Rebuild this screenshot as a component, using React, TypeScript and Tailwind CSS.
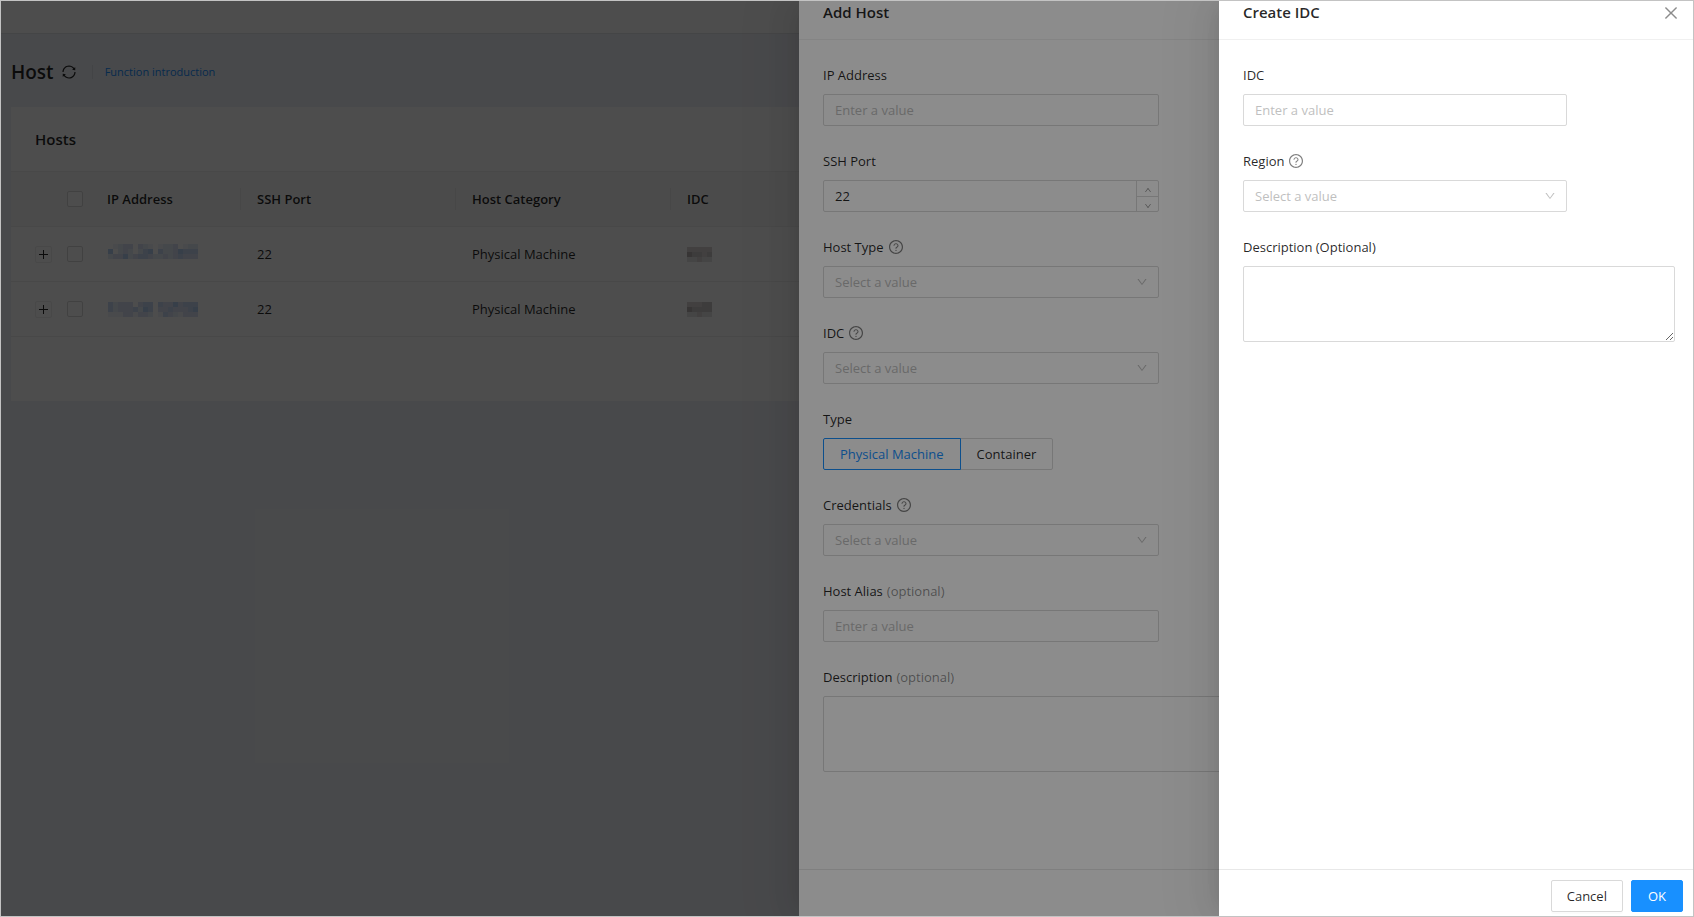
import { useState, type ReactNode } from "react";
import {
  AiOutlineClose,
  AiOutlineDown,
  AiOutlineQuestionCircle,
  AiOutlineSync,
  AiOutlineUp,
} from "react-icons/ai";

const drawerShadow =
  "shadow-[-6px_0_16px_-8px_rgba(0,0,0,0.08),-9px_0_28px_0_rgba(0,0,0,0.05),-12px_0_48px_16px_rgba(0,0,0,0.03)]";
const boxStyle =
  "border border-[#d9d9d9] rounded-xs bg-white text-black/85 placeholder:text-[#bfbfbf] outline-none focus:border-[#1890ff]";

// Masked values are drawn as 5px tiles, one string per tile row; higher digits mean stronger tiles.
const blueTones = ["transparent", "#f4f6fb", "#e8eef9", "#dae4f8", "#cbdcf7", "#b8d2f5"];
const grayTones = ["transparent", "#f1f1f1", "#e8e7e7", "#dad8d8", "#cbc8c7", "#b6b1b2"];

function Mosaic({ rows, tones, label }: { rows: string[]; tones: string[]; label: string }) {
  return (
    <svg
      width={rows[0].length * 5}
      height={rows.length * 5}
      role="img"
      aria-label={label}
      shapeRendering="crispEdges"
      className="block"
    >
      {rows.map((row, y) =>
        row.split("").map((tone, x) => (
          <rect key={`${x}-${y}`} x={x * 5} y={y * 5} width="5" height="5" fill={tones[Number(tone)]} />
        )),
      )}
    </svg>
  );
}

function Field({
  id,
  label,
  optional,
  help,
  children,
}: {
  id: string;
  label: string;
  optional?: boolean;
  help?: boolean;
  children: ReactNode;
}) {
  return (
    <div className="mb-6">
      <div className="mb-2 flex h-[22px] items-center gap-1">
        <label htmlFor={id}>{label}</label>
        {optional && <span className="text-black/45">(optional)</span>}
        {help && <AiOutlineQuestionCircle className="size-4 text-black/50" />}
      </div>
      {children}
    </div>
  );
}

function SelectBox({ id, width }: { id: string; width: string }) {
  return (
    <div className={`relative max-w-full ${width}`}>
      <select
        id={id}
        defaultValue=""
        className="block h-8 w-full appearance-none rounded-xs border border-[#d9d9d9] bg-white pr-8 pl-[11px] text-[#bfbfbf] outline-none"
      >
        <option value="">Select a value</option>
      </select>
      <AiOutlineDown className="pointer-events-none absolute top-[10px] right-[11px] size-3 text-black/25" />
    </div>
  );
}

function Drawer({
  title,
  width,
  closable,
  footer,
  children,
}: {
  title: string;
  width: string;
  closable?: boolean;
  footer?: ReactNode;
  children: ReactNode;
}) {
  return (
    <div className="absolute inset-0 isolate flex justify-end bg-black/45">
      <section
        aria-label={title}
        className={`flex h-full max-w-full flex-col bg-white ${width} ${drawerShadow}`}
      >
        <header className="flex h-[39px] shrink-0 items-start justify-between border-b border-[#f0f0f0] pr-[13px] pl-6">
          <h2 className="text-[15px] leading-[22px] font-semibold">{title}</h2>
          {closable && (
            <button type="button" aria-label="Close" className="mt-[3px] text-black/45">
              <AiOutlineClose className="size-[18px]" />
            </button>
          )}
        </header>
        <div className="min-h-0 flex-1 overflow-hidden pt-6 pr-[18px] pl-6">{children}</div>
        <footer className="flex h-[47px] shrink-0 items-start justify-end gap-2 border-t border-[#e8e8e8] px-[10px] pt-[10px]">
          {footer}
        </footer>
      </section>
    </div>
  );
}

const hosts = [
  {
    ip: ["012330321012230122", "502320245042235444", "233523443223234333", "000000000000000000"],
    idc: ["33333", "54434", "22322"],
  },
  {
    ip: ["423330344043353444", "423334254033433345", "111331332014321333"],
    idc: ["33344", "54444", "22322"],
  },
];

const cell = "border-b border-[#f0f0f0]";
const divided =
  "relative pl-4 text-left font-semibold before:absolute before:top-4 before:left-[-1px] before:h-[22px] before:w-px before:bg-black/6";
const tick = "block size-4 appearance-none rounded-xs border border-[#d9d9d9] bg-white";

function HostsPage() {
  return (
    <div className="h-full bg-[#f0f3f9]">
      <div className="h-[33px] border-b border-[#e4e6e9] bg-white" />
      <div className="pt-[23px] pl-[10px]">
        <div className="flex h-[30px] items-center">
          <h1 className="text-[19px] font-semibold">Host</h1>
          <button type="button" aria-label="Refresh" className="ml-[7px]">
            <AiOutlineSync className="size-4" />
          </button>
          <a href="#intro" className="ml-[15px] border-l border-black/6 pl-3 text-[11px] leading-[14px] text-[#1890ff]">
            Function introduction
          </a>
        </div>
        <main className="mt-5 bg-white pb-16">
          <h2 className="flex h-[65px] items-center border-b border-[#f0f0f0] pl-6 text-[15px] font-semibold">Hosts</h2>
          <table className="w-full table-fixed border-separate border-spacing-0">
            <colgroup>
              <col className="w-12" />
              <col className="w-8" />
              <col className="w-[150px]" />
              <col className="w-[215px]" />
              <col className="w-[215px]" />
              <col />
            </colgroup>
            <thead>
              <tr className="h-[55px] bg-[#fafafa]">
                <th className={cell} />
                <th className={`${cell} pl-2`}>
                  <input type="checkbox" aria-label="Select all hosts" className={tick} />
                </th>
                <th className={`${cell} pl-4 text-left font-semibold`}>IP Address</th>
                <th className={`${cell} ${divided}`}>SSH Port</th>
                <th className={`${cell} ${divided}`}>Host Category</th>
                <th className={`${cell} ${divided}`}>IDC</th>
              </tr>
            </thead>
            <tbody>
              {hosts.map((host, i) => (
                <tr key={i} className="h-[55px]">
                  <td className={`${cell} pl-6`}>
                    <button
                      type="button"
                      aria-label="Expand row"
                      className="flex size-[17px] items-center justify-center rounded-xs border border-[#f0f0f0]"
                    >
                      <svg viewBox="0 0 9 9" className="size-[9px] shrink-0" fill="currentColor" shapeRendering="crispEdges">
                        <path d="M4 0h1v4h4v1H5v4H4V5H0V4h4z" />
                      </svg>
                    </button>
                  </td>
                  <td className={`${cell} pl-2`}>
                    <input type="checkbox" aria-label={`Select host ${i + 1}`} className={tick} />
                  </td>
                  <td className={`${cell} pl-[17px]`}>
                    <Mosaic rows={host.ip} tones={blueTones} label="Masked address" />
                  </td>
                  <td className={`${cell} pl-4`}>22</td>
                  <td className={`${cell} pl-4`}>Physical Machine</td>
                  <td className={`${cell} pl-4`}>
                    <Mosaic rows={host.idc} tones={grayTones} label="Masked IDC" />
                  </td>
                </tr>
              ))}
            </tbody>
          </table>
        </main>
      </div>
    </div>
  );
}

export default function App() {
  const [port, setPort] = useState(22);
  const [kind, setKind] = useState("Physical Machine");

  return (
    <div className="relative h-screen overflow-hidden border border-[#c3c3c3] font-['Open_Sans',sans-serif] text-[13px] leading-[22px] text-black/85">
      <HostsPage />

      <Drawer title="Add Host" width="w-[894px]">
        <Field id="host-ip" label="IP Address">
          <input id="host-ip" placeholder="Enter a value" className={`block h-8 w-[336px] max-w-full px-[11px] ${boxStyle}`} />
        </Field>
        <Field id="host-port" label="SSH Port">
          <div className="flex h-8 w-[336px] max-w-full rounded-xs border border-[#d9d9d9]">
            <input
              id="host-port"
              inputMode="numeric"
              value={port}
              onChange={(e) => setPort(Number(e.target.value) || 0)}
              className="min-w-0 flex-1 px-[11px] outline-none"
            />
            <div className="flex w-[22px] flex-col border-l border-[#d9d9d9] text-black/45">
              <button
                type="button"
                aria-label="Increase"
                onClick={() => setPort(port + 1)}
                className="flex flex-1 items-center justify-center pt-1"
              >
                <AiOutlineUp className="size-2" />
              </button>
              <button
                type="button"
                aria-label="Decrease"
                onClick={() => setPort(port - 1)}
                className="flex flex-1 items-center justify-center border-t border-[#d9d9d9] pt-1"
              >
                <AiOutlineDown className="size-2" />
              </button>
            </div>
          </div>
        </Field>
        <Field id="host-type" label="Host Type" help>
          <SelectBox id="host-type" width="w-[336px]" />
        </Field>
        <Field id="host-idc" label="IDC" help>
          <SelectBox id="host-idc" width="w-[336px]" />
        </Field>
        <Field id="kind-0" label="Type">
          <div className="flex h-8">
            {["Physical Machine", "Container"].map((name, i) => (
              <label
                key={name}
                className={
                  kind === name
                    ? "relative z-10 flex items-center border border-[#1890ff] px-4 text-[#1890ff] first:rounded-l-xs last:-ml-px last:rounded-r-xs"
                    : "flex items-center border border-[#d9d9d9] px-4 first:rounded-l-xs last:-ml-px last:rounded-r-xs"
                }
              >
                <input
                  id={`kind-${i}`}
                  type="radio"
                  name="kind"
                  checked={kind === name}
                  onChange={() => setKind(name)}
                  className="sr-only"
                />
                {name}
              </label>
            ))}
          </div>
        </Field>
        <Field id="host-cred" label="Credentials" help>
          <SelectBox id="host-cred" width="w-[336px]" />
        </Field>
        <Field id="host-alias" label="Host Alias" optional>
          <input id="host-alias" placeholder="Enter a value" className={`block h-8 w-[336px] max-w-full px-[11px] ${boxStyle}`} />
        </Field>
        <Field id="host-desc" label="Description" optional>
          <textarea id="host-desc" className={`block h-[76px] w-full px-[11px] py-1 ${boxStyle}`} />
        </Field>
      </Drawer>

      <Drawer
        title="Create IDC"
        width="w-[474px]"
        closable
        footer={
          <>
            <button type="button" className="h-8 rounded-xs border border-[#d9d9d9] px-[15px] shadow-[0_2px_0_rgba(0,0,0,0.016)]">
              Cancel
            </button>
            <button type="button" className="h-8 rounded-xs border border-[#1890ff] bg-[#1890ff] px-4 text-white">
              OK
            </button>
          </>
        }
      >
        <Field id="idc-name" label="IDC">
          <input id="idc-name" placeholder="Enter a value" className={`block h-8 w-3/4 px-[11px] ${boxStyle}`} />
        </Field>
        <Field id="idc-region" label="Region" help>
          <SelectBox id="idc-region" width="w-3/4" />
        </Field>
        <Field id="idc-desc" label="Description (Optional)">
          <textarea id="idc-desc" className={`block h-[76px] w-full px-[11px] py-1 ${boxStyle}`} />
        </Field>
      </Drawer>
    </div>
  );
}
